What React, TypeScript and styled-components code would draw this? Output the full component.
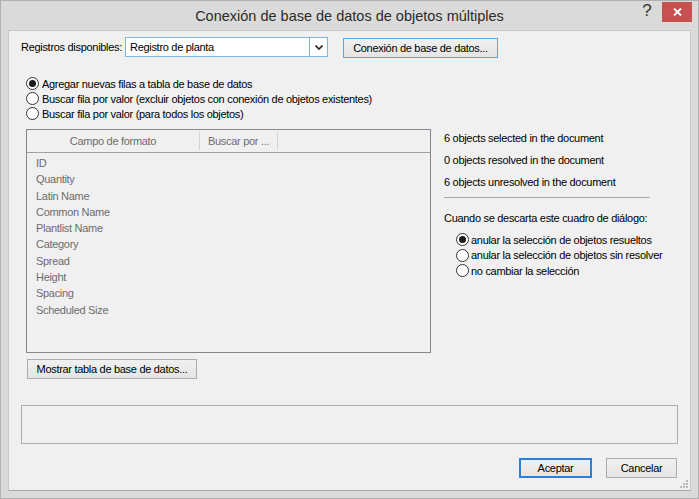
import React from 'react'
import styled, { createGlobalStyle } from 'styled-components'

const GlobalStyle = createGlobalStyle`
  html, body {
    margin: 0;
    padding: 0;
    background: #dadada;
  }
`

const fields = [
  'ID',
  'Quantity',
  'Latin Name',
  'Common Name',
  'Plantlist Name',
  'Category',
  'Spread',
  'Height',
  'Spacing',
  'Scheduled Size',
]

const modes = [
  'Agregar nuevas filas a tabla de base de datos',
  'Buscar fila por valor (excluir objetos con conexión de objetos existentes)',
  'Buscar fila por valor (para todos los objetos)',
]

const dismissOptions = [
  'anular la selección de objetos resueltos',
  'anular la selección de objetos sin resolver',
  'no cambiar la selección',
]

const Radio: React.FC<{ checked?: boolean; label: string; gap: number; rowHeight: number }> = ({
  checked,
  label,
  gap,
  rowHeight,
}) => (
  <RadioRow $gap={gap} $height={rowHeight}>
    <RadioCircle>{checked && <RadioDot />}</RadioCircle>
    <span>{label}</span>
  </RadioRow>
)

const App: React.FC = () => {
  return (
    <>
      <GlobalStyle />
      <Window>
        <TitleBar>
          <span />
          <Title>Conexión de base de datos de objetos múltiples</Title>
          <Controls>
            <Help>?</Help>
            <Close>
              <svg width="9" height="8" viewBox="0 0 9 8">
                <path d="M1 0.5 L8 7.5 M8 0.5 L1 7.5" stroke="#fff" strokeWidth="1.8" />
              </svg>
            </Close>
          </Controls>
        </TitleBar>

        <Client>
          <TopRow>
            <FieldLabel>Registros disponibles:</FieldLabel>
            <Combo>
              <ComboText>Registro de planta</ComboText>
              <ComboArrow>
                <svg width="8" height="5" viewBox="0 0 8 5">
                  <path d="M0.5 0.5 L4 4 L7.5 0.5" fill="none" stroke="#222" strokeWidth="1.6" />
                </svg>
              </ComboArrow>
            </Combo>
            <ConnectButton>Conexión de base de datos...</ConnectButton>
          </TopRow>

          <ModeGroup>
            {modes.map((m, i) => (
              <Radio key={m} label={m} checked={i === 0} gap={3} rowHeight={15} />
            ))}
          </ModeGroup>

          <Middle>
            <LeftCol>
              <Table>
                <Header>
                  <HeaderCell $width={173} $align="center">
                    Campo de formato
                  </HeaderCell>
                  <HeaderCell $width={78} $align="left">
                    Buscar por ...
                  </HeaderCell>
                </Header>
                <List>
                  {fields.map((f) => (
                    <Item key={f}>{f}</Item>
                  ))}
                </List>
              </Table>
              <ShowButton>Mostrar tabla de base de datos...</ShowButton>
            </LeftCol>

            <RightCol>
              <InfoLine>6 objects selected in the document</InfoLine>
              <InfoLine>0 objects resolved in the document</InfoLine>
              <InfoLine>6 objects unresolved in the document</InfoLine>
              <Separator />
              <Question>Cuando se descarta este cuadro de diálogo:</Question>
              <DismissGroup>
                {dismissOptions.map((o, i) => (
                  <Radio key={o} label={o} checked={i === 0} gap={2} rowHeight={15.5} />
                ))}
              </DismissGroup>
            </RightCol>
          </Middle>

          <MessageBox />

          <Footer>
            <DialogButton $primary>Aceptar</DialogButton>
            <DialogButton>Cancelar</DialogButton>
          </Footer>

          <Grip>
            <svg width="9" height="9" viewBox="0 0 9 9">
              <rect x="7" y="1" width="2" height="2" fill="#b8b8b8" />
              <rect x="4" y="4" width="2" height="2" fill="#b8b8b8" />
              <rect x="7" y="4" width="2" height="2" fill="#b8b8b8" />
              <rect x="1" y="7" width="2" height="2" fill="#b8b8b8" />
              <rect x="4" y="7" width="2" height="2" fill="#b8b8b8" />
              <rect x="7" y="7" width="2" height="2" fill="#b8b8b8" />
            </svg>
          </Grip>
        </Client>
      </Window>
    </>
  )
}

export default App

const Window = styled.div`
  width: 699px;
  height: 499px;
  box-sizing: border-box;
  border: 1px solid #b0b0b0;
  background: #dadada;
  display: flex;
  flex-direction: column;
  font-family: 'Liberation Sans', Arial, sans-serif;
  font-size: 11px;
  letter-spacing: -0.3px;
  color: #000;
`

const TitleBar = styled.div`
  height: 29px;
  flex-shrink: 0;
  display: grid;
  grid-template-columns: 1fr auto 1fr;
  align-items: start;
`

const Title = styled.div`
  font-size: 14.5px;
  letter-spacing: 0;
  color: #2b2b2b;
  line-height: 29px;
  padding-top: 1px;
  white-space: nowrap;
`

const Controls = styled.div`
  justify-self: end;
  display: flex;
  padding: 1px 6px 0 0;
`

const Help = styled.div`
  width: 26px;
  height: 20px;
  margin-right: 2px;
  text-align: center;
  font-size: 17px;
  line-height: 18px;
  color: #333;
  letter-spacing: 0;
`

const Close = styled.div`
  width: 30px;
  height: 20px;
  background: #c75050;
  display: flex;
  align-items: center;
  justify-content: center;
`

const Client = styled.div`
  position: relative;
  flex: 1;
  margin: 0 7px 7px 7px;
  background: #f0f0f0;
  border: 1px solid #c6c6c6;
  border-bottom-color: #a8a8a8;
  display: flex;
  flex-direction: column;
`

const TopRow = styled.div`
  display: flex;
  align-items: flex-start;
  margin: 6px 0 0 12px;
`

const FieldLabel = styled.div`
  width: 104px;
  line-height: 21px;
  white-space: nowrap;
`

const Combo = styled.div`
  width: 203px;
  height: 20px;
  box-sizing: border-box;
  border: 1px solid #7eb4ea;
  background: #fff;
  display: flex;
`

const ComboText = styled.div`
  flex: 1;
  padding-left: 4px;
  line-height: 18px;
`

const ComboArrow = styled.div`
  width: 17px;
  border-left: 1px solid #7eb4ea;
  display: flex;
  align-items: center;
  justify-content: center;
`

const buttonBase = `
  box-sizing: border-box;
  height: 20px;
  padding: 0;
  font-family: inherit;
  font-size: 11px;
  letter-spacing: -0.3px;
  color: #000;
  background: linear-gradient(#f0f0f0, #e5e5e5);
  white-space: nowrap;
`

const ConnectButton = styled.button`
  ${buttonBase}
  margin: 1px 0 0 15px;
  width: 155px;
  border: 1px solid #5ea3e6;
`

const ModeGroup = styled.div`
  margin: 18px 0 0 17px;
  display: flex;
  flex-direction: column;
`

const RadioRow = styled.div<{ $gap: number; $height: number }>`
  display: flex;
  align-items: center;
  gap: ${(p) => p.$gap}px;
  height: ${(p) => p.$height}px;
  white-space: nowrap;
`

const RadioCircle = styled.div`
  width: 13px;
  height: 13px;
  box-sizing: border-box;
  border: 1px solid #333;
  border-radius: 50%;
  background: #fff;
  display: flex;
  align-items: center;
  justify-content: center;
`

const RadioDot = styled.div`
  width: 7px;
  height: 7px;
  border-radius: 50%;
  background: #1a1a1a;
`

const Middle = styled.div`
  display: flex;
  margin-top: 8px;
  padding-left: 17px;
`

const LeftCol = styled.div`
  width: 405px;
  display: flex;
  flex-direction: column;
`

const Table = styled.div`
  height: 224px;
  box-sizing: border-box;
  border: 1px solid #828790;
  background: #f0f0f0;
`

const Header = styled.div`
  display: flex;
  align-items: center;
  height: 23px;
  box-sizing: border-box;
  border-bottom: 1px solid #a0a0a0;
`

const HeaderCell = styled.div<{ $width: number; $align: 'left' | 'center' }>`
  width: ${(p) => p.$width}px;
  box-sizing: border-box;
  height: 18px;
  line-height: 18px;
  border-right: 1px solid #d5d5d5;
  color: #6d6d6d;
  text-align: ${(p) => p.$align};
  padding-left: ${(p) => (p.$align === 'left' ? 8 : 0)}px;
  white-space: nowrap;
`

const List = styled.div`
  padding-top: 2px;
`

const Item = styled.div`
  height: 16.3px;
  line-height: 16.3px;
  padding-left: 9px;
  color: #6d6d6d;
`

const ShowButton = styled.button`
  ${buttonBase}
  margin: 6px 0 0 1px;
  width: 170px;
  border: 1px solid #adadad;
`

const RightCol = styled.div`
  margin-left: 13px;
  padding-top: 2px;
  display: flex;
  flex-direction: column;
`

const InfoLine = styled.div`
  line-height: 14px;
  margin-bottom: 8px;
  white-space: nowrap;
`

const Separator = styled.div`
  width: 206px;
  height: 1px;
  background: #a9a9a9;
  margin-bottom: 13px;
`

const Question = styled.div`
  line-height: 14px;
  margin-bottom: 7px;
  white-space: nowrap;
`

const DismissGroup = styled.div`
  padding-left: 12px;
  display: flex;
  flex-direction: column;
`

const MessageBox = styled.div`
  margin: 26px 0 0 12px;
  width: 657px;
  height: 39px;
  box-sizing: border-box;
  border: 1px solid #adadad;
`

const Footer = styled.div`
  display: flex;
  justify-content: flex-end;
  gap: 14px;
  margin-top: 14px;
  padding-right: 13px;
`

const DialogButton = styled.button<{ $primary?: boolean }>`
  ${buttonBase}
  width: ${(p) => (p.$primary ? 73 : 71)}px;
  border: ${(p) => (p.$primary ? '2px solid #2b80d8' : '1px solid #adadad')};
`

const Grip = styled.div`
  position: absolute;
  right: 2px;
  bottom: 2px;
  width: 9px;
  height: 9px;
  display: flex;
`
